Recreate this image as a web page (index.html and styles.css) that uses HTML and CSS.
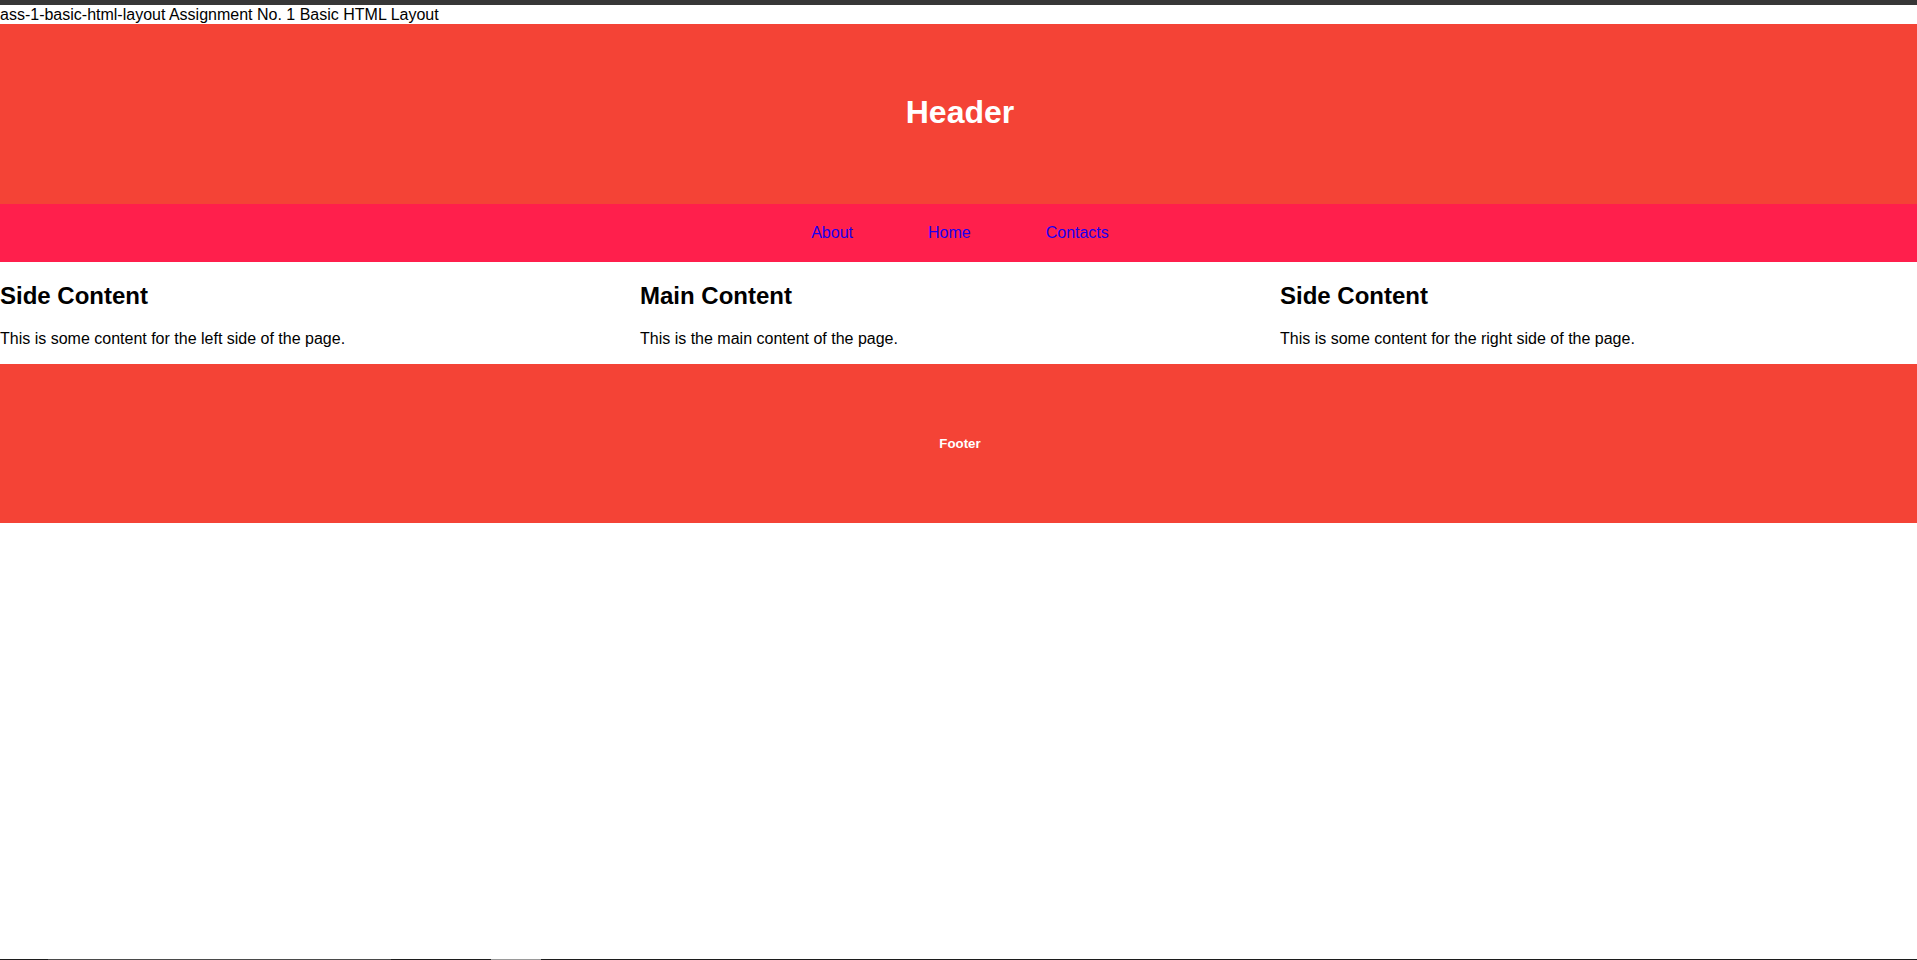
FILE: index.html
```html
<!DOCTYPE html>
<html lang="en">
<head>
<meta charset="utf-8">
<title>Basic HTML Layout</title>
<link rel="stylesheet" href="styles.css">
</head>
<body>
<div class="page">
  <div class="topbar"></div>
  <div class="doc-title">ass-1-basic-html-layout Assignment No. 1 Basic HTML Layout</div>
  <header class="site-header">
    <h1>Header</h1>
  </header>
  <nav class="site-nav">
    <a href="#about">About</a>
    <a href="#home">Home</a>
    <a href="#contacts">Contacts</a>
  </nav>
  <main class="columns">
    <section class="col">
      <h2>Side Content</h2>
      <p>This is some content for the left side of the page.</p>
    </section>
    <section class="col">
      <h2>Main Content</h2>
      <p>This is the main content of the page.</p>
    </section>
    <section class="col">
      <h2>Side Content</h2>
      <p>This is some content for the right side of the page.</p>
    </section>
  </main>
  <footer class="site-footer">
    <h5>Footer</h5>
  </footer>
  <div class="bottom-edge">
    <span class="seg dark w48"></span>
    <span class="seg grey w343"></span>
    <span class="seg dark w100"></span>
    <span class="seg light w50"></span>
    <span class="seg dark grow"></span>
  </div>
</div>
</body>
</html>
```
FILE: styles.css
```css
html, body {
  margin: 0;
  padding: 0;
  background: #ffffff;
  overflow: hidden;
}

body {
  font-family: "Liberation Sans", Arial, sans-serif;
  font-size: 16px;
  color: #000;
}

.page {
  width: 1920px;
  height: 960px;
  display: flex;
  flex-direction: column;
  overflow: hidden;
}

.topbar {
  height: 5px;
  background: #373737;
  flex: none;
}

.doc-title {
  height: 19px;
  line-height: 19px;
  flex: none;
}

.site-header {
  height: 180px;
  background: #f44336;
  display: flex;
  align-items: center;
  justify-content: center;
  flex: none;
}

.site-header h1 {
  margin: 0;
  font-size: 32px;
  font-weight: bold;
  color: #fff;
  position: relative;
  top: -2px;
}

.site-nav {
  height: 58px;
  background: #ff1f4c;
  display: flex;
  align-items: center;
  justify-content: center;
  gap: 75px;
  flex: none;
}

.site-nav a {
  color: #1a00ee;
  text-decoration: none;
  font-size: 16px;
}

.columns {
  display: flex;
  flex: none;
}

.col {
  flex: 1 1 0;
}

.col h2 {
  font-size: 24px;
  font-weight: bold;
  margin: 19.92px 0;
}

.col p {
  margin: 16px 0;
}

.site-footer {
  height: 159px;
  background: #f44336;
  display: flex;
  align-items: center;
  justify-content: center;
  flex: none;
}

.site-footer h5 {
  margin: 0;
  font-size: 13.28px;
  font-weight: bold;
  color: #fff;
}

.bottom-edge {
  margin-top: auto;
  height: 1px;
  display: flex;
  flex: none;
}

.seg { display: block; height: 1px; }
.dark { background: #1c1c1c; }
.grey { background: #4a4a4a; }
.light { background: #9a9a9a; }
.w48 { width: 48px; }
.w343 { width: 343px; }
.w100 { width: 100px; }
.w50 { width: 50px; }
.grow { flex: 1; }
```
